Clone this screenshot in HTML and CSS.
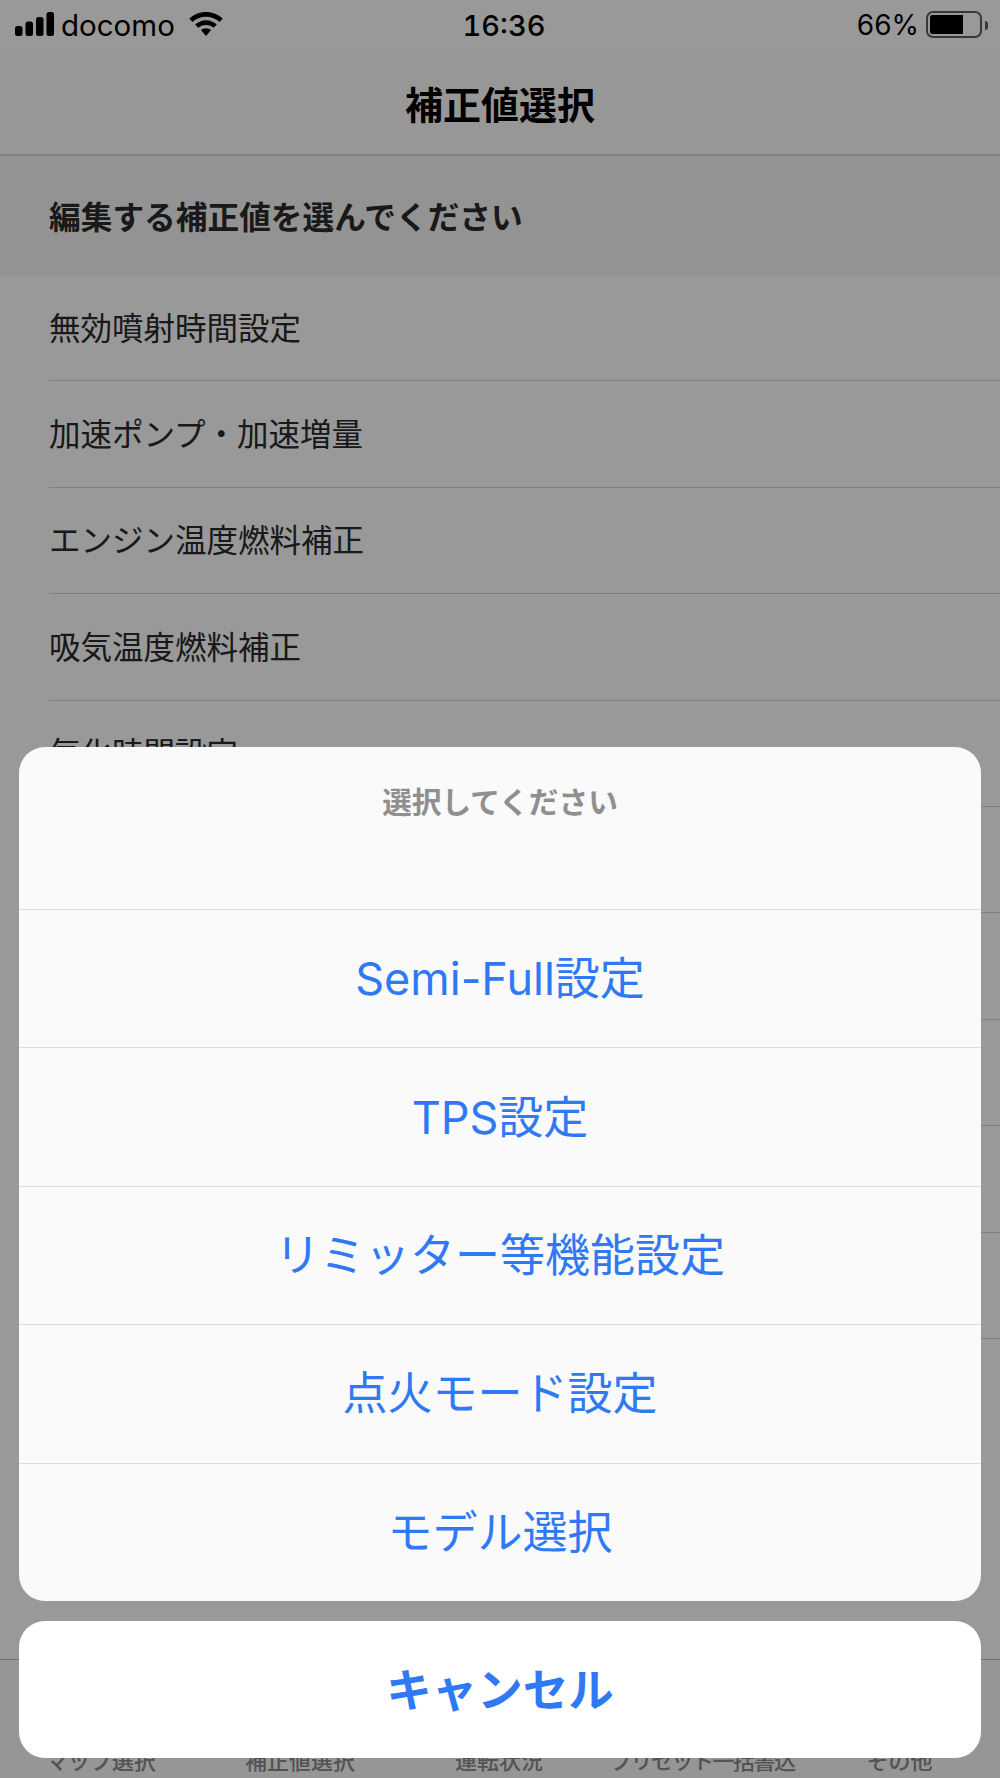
FILE: index.html
```html
<!DOCTYPE html>
<html lang="ja">
  <head>
    <meta charset="UTF-8" />
    <meta name="viewport" content="width=device-width, initial-scale=1.0" />
    <title>補正値選択</title>
    <link rel="stylesheet" href="styles.css">
  </head>
  <body>
    <div class="phone">
      <div class="screen">
        <div class="status-bar">
          <div class="status-left">
            <svg class="signal" width="40" height="24" viewBox="0 0 40 24">
              <rect x="0" y="14" width="7.5" height="10" rx="2.5" />
              <rect x="10.5" y="9.5" width="7.5" height="14.5" rx="2.5" />
              <rect x="21" y="5" width="7.5" height="19" rx="2.5" />
              <rect x="31.5" y="0" width="7.5" height="24" rx="2.5" />
            </svg>
            <span class="carrier">docomo</span>
            <svg class="wifi" width="34" height="24" viewBox="0 0 34 24">
              <path d="M17 0C10.500 0 4.700 2.500 0.300 6.600L3.400 10C7 6.700 11.800 4.700 17 4.700S27 6.700 30.600 10L33.700 6.600C29.300 2.500 23.500 0 17 0Z" />
              <path d="M17 8.200C12.800 8.200 9 9.800 6.200 12.500L9.300 15.800C11.300 14 14 12.900 17 12.900S22.700 14 24.700 15.800L27.800 12.500C25 9.800 21.200 8.200 17 8.200Z" />
              <path d="M17 16.200C15 16.200 13.300 16.900 12 18.100L17 24L22 18.100C20.700 16.900 19 16.200 17 16.200Z" />
            </svg>
          </div>
          <span class="clock">16:36</span>
          <div class="status-right">
            <span class="percent">66%</span>
            <div class="battery"><div class="battery-fill"></div></div>
            <div class="battery-nub"></div>
          </div>
        </div>

        <div class="nav-bar">補正値選択</div>

        <div class="section-header"><span class="section-text">編集する補正値を選んでください</span></div>

        <div class="list">
          <div class="row"><span class="row-text">無効噴射時間設定</span></div>
          <div class="row"><span class="row-text">加速ポンプ・加速増量</span></div>
          <div class="row"><span class="row-text">エンジン温度燃料補正</span></div>
          <div class="row"><span class="row-text">吸気温度燃料補正</span></div>
          <div class="row"><span class="row-text">気化時間設定</span></div>
          <div class="row"></div>
          <div class="row"></div>
          <div class="row"></div>
          <div class="row"></div>
          <div class="row"></div>
        </div>

        <div class="tab-bar">
          <span class="tab tab-map">マップ選択</span>
          <span class="tab tab-hosei">補正値選択</span>
          <span class="tab tab-status">運転状況</span>
          <span class="tab tab-preset">プリセット一括書込</span>
          <span class="tab tab-other">その他</span>
        </div>
      </div>

      <div class="dim"></div>

      <div class="sheet-wrap">
        <div class="sheet">
          <div class="sheet-title">選択してください</div>
          <div class="sheet-item">Semi-Full設定</div>
          <div class="sheet-item">TPS設定</div>
          <div class="sheet-item">リミッター等機能設定</div>
          <div class="sheet-item">点火モード設定</div>
          <div class="sheet-item">モデル選択</div>
        </div>
        <div class="cancel">キャンセル</div>
      </div>
    </div>
  </body>
</html>
```

FILE: styles.css
```css
* {
  box-sizing: border-box;
}
body {
  margin: 0;
  font-family: Inter, "Noto Sans CJK JP", sans-serif;
  background-color: #fff;
}
.phone {
  position: relative;
  width: 1000px;
  height: 1778px;
  overflow: hidden;
}
.screen {
  display: flex;
  flex-direction: column;
  height: 1778px;
  color: #000;
}

/* status bar */
.status-bar {
  display: flex;
  align-items: center;
  justify-content: space-between;
  height: 50px;
  padding: 0 12px 0 15px;
  position: relative;
  font-size: 28px;
}
.status-left {
  display: flex;
  align-items: center;
}
.signal {
  margin-top: -2px;
}
.carrier {
  margin-left: 6px;
  font-size: 29.5px;
}
.wifi {
  margin-left: 14px;
  margin-top: -3px;
}
.clock {
  position: absolute;
  left: 8px;
  right: 0;
  text-align: center;
  font-size: 29px;
  font-weight: 500;
  font-variant-numeric: tabular-nums;
}
.status-right {
  display: flex;
  align-items: center;
}
.percent {
  margin-right: 7px;
}
.battery {
  width: 56px;
  height: 27px;
  margin-top: -1px;
  padding: 2px;
  border: 2px solid #5e5e5e;
  border-radius: 7px;
}
.battery-fill {
  width: 33px;
  height: 100%;
  background: #000;
  border-radius: 2px 0 0 2px;
}
.battery-nub {
  width: 3px;
  height: 9px;
  margin-left: 3px;
  background: #5e5e5e;
  border-radius: 0 3px 3px 0;
}

/* page behind the sheet */
.nav-bar {
  height: 106px;
  display: flex;
  align-items: center;
  justify-content: center;
  font-size: 38px;
  font-weight: 700;
  background: #fcfcfc;
  border-bottom: 2px solid #d8d8d8;
}
.section-header {
  height: 119px;
  padding-left: 49px;
  display: flex;
  align-items: center;
  font-size: 31.7px;
  font-weight: 700;
  color: #2a2a2a;
  background: #f6f6f6;
}
.section-text {
  margin-top: -1px;
}
.list {
  flex: 1;
  padding-left: 49px;
  overflow: hidden;
}
.row {
  height: 106.4px;
  display: flex;
  align-items: center;
  font-size: 31.5px;
  color: #2a2a2a;
  border-bottom: 1px solid #d4d4d4;
}
.row-text {
  margin-top: -4px;
}
.tab-bar {
  height: 119px;
  flex-shrink: 0;
  display: flex;
  align-items: flex-end;
  padding-bottom: 3px;
  font-size: 22px;
  font-weight: 500;
  color: #8a8a8a;
  background: #fafafa;
  border-top: 1px solid #bbb;
}
.tab-map {
  margin-left: 46px;
}
.tab-hosei {
  margin-left: 89px;
}
.tab-status {
  margin-left: 100px;
}
.tab-preset {
  margin-left: 67px;
  letter-spacing: -1.5px;
}
.tab-other {
  margin-left: 72px;
}

/* dimmed layer and action sheet */
.dim {
  position: absolute;
  inset: 0;
  background: rgba(0, 0, 0, 0.4);
}
.sheet-wrap {
  position: absolute;
  left: 19px;
  right: 19px;
  top: 747px;
  display: flex;
  flex-direction: column;
  gap: 20px;
}
.sheet {
  background: #fafafa;
  border-radius: 26px;
  overflow: hidden;
}
.sheet-title {
  height: 162px;
  padding-top: 35px;
  text-align: center;
  font-size: 29.7px;
  line-height: 40px;
  font-weight: 700;
  color: #8f8f8f;
}
.sheet-item {
  height: 138.4px;
  padding-bottom: 6px;
  display: flex;
  align-items: center;
  justify-content: center;
  font-size: 45px;
  color: #3079f5;
  border-top: 1px solid #dcdcdc;
}
.cancel {
  height: 137px;
  padding-bottom: 4px;
  display: flex;
  align-items: center;
  justify-content: center;
  font-size: 45.5px;
  font-weight: 700;
  color: #3079f5;
  background: #fff;
  border-radius: 26px;
}
```
